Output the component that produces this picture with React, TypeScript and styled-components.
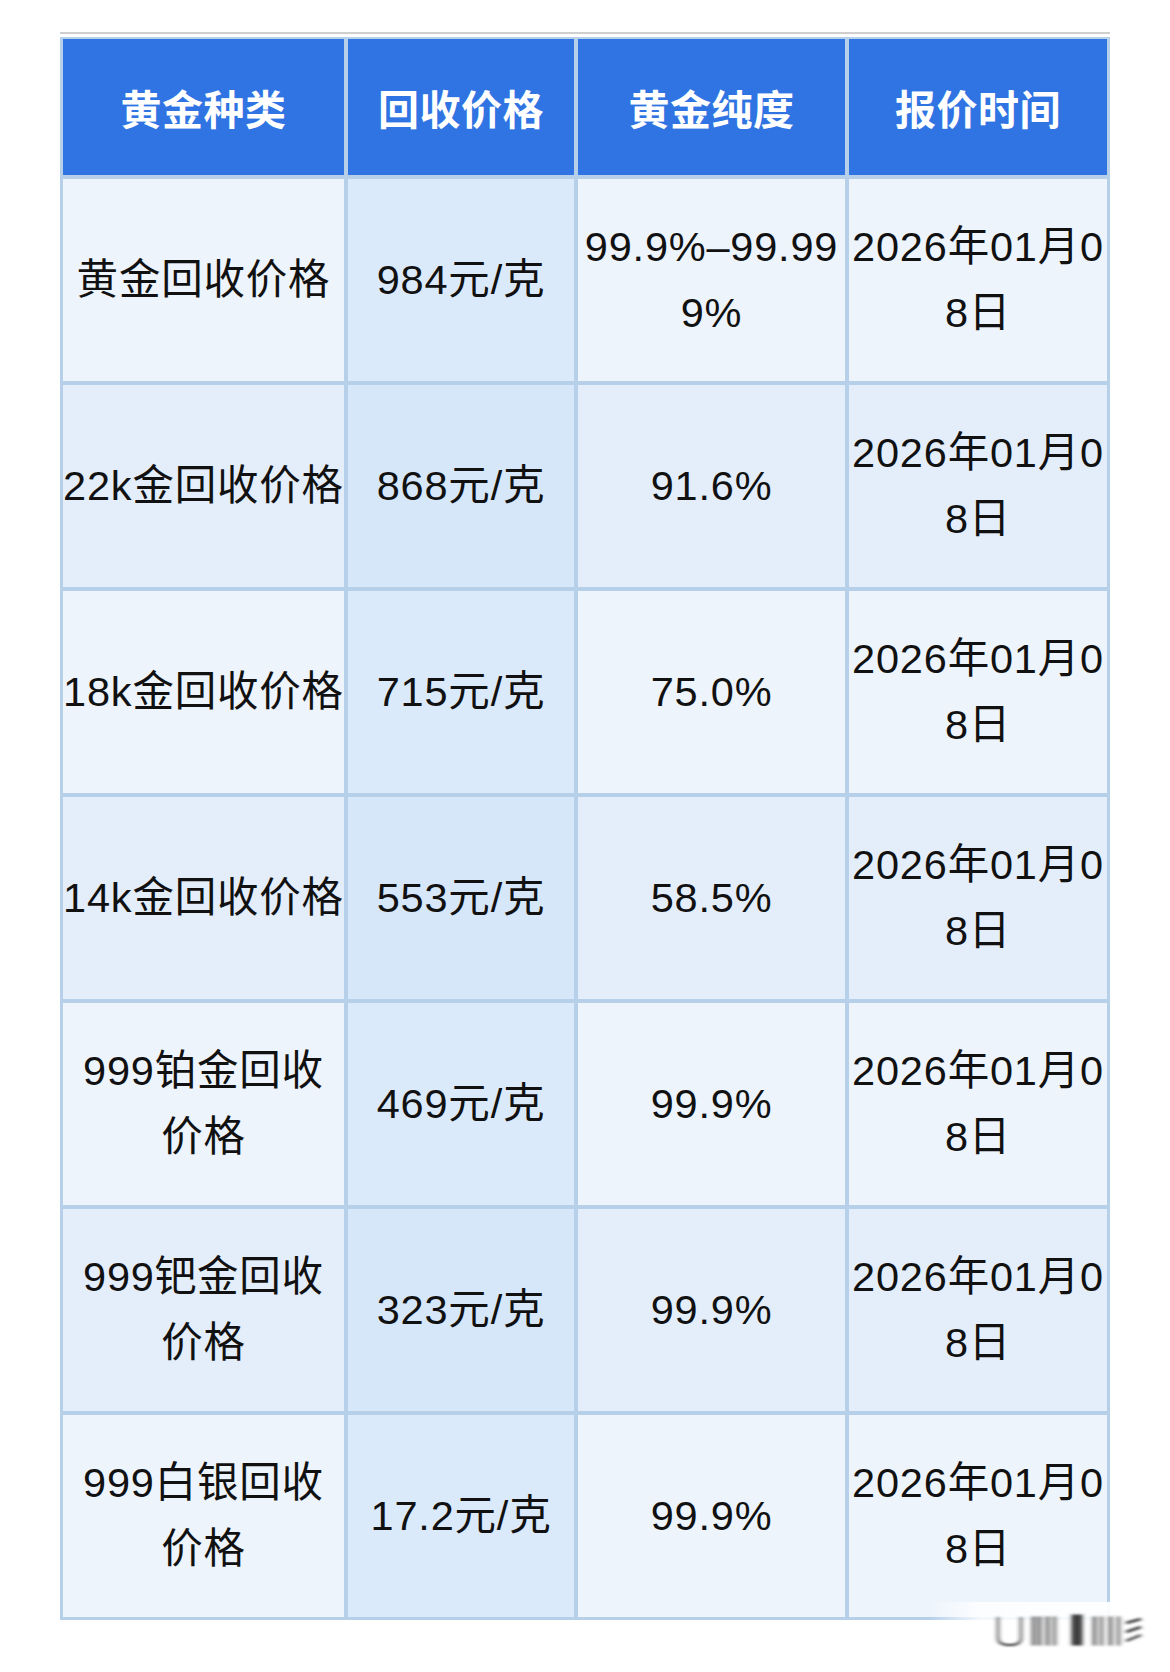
import React from "react";
import styled, { createGlobalStyle } from "styled-components";

const GlobalStyle = createGlobalStyle`
  html, body {
    margin: 0;
    padding: 0;
    background: #ffffff;
  }
  body {
    font-family: "Liberation Sans", "Noto Sans CJK SC", sans-serif;
    color: #111111;
  }
`;

type PriceRow = {
  kind: string[];
  price: string;
  purity: string[];
  date: string[];
};

const columns = ["黄金种类", "回收价格", "黄金纯度", "报价时间"];

const quoteDate = ["2026年01月0", "8日"];

const rows: PriceRow[] = [
  { kind: ["黄金回收价格"], price: "984元/克", purity: ["99.9%–99.99", "9%"], date: quoteDate },
  { kind: ["22k金回收价格"], price: "868元/克", purity: ["91.6%"], date: quoteDate },
  { kind: ["18k金回收价格"], price: "715元/克", purity: ["75.0%"], date: quoteDate },
  { kind: ["14k金回收价格"], price: "553元/克", purity: ["58.5%"], date: quoteDate },
  { kind: ["999铂金回收", "价格"], price: "469元/克", purity: ["99.9%"], date: quoteDate },
  { kind: ["999钯金回收", "价格"], price: "323元/克", purity: ["99.9%"], date: quoteDate },
  { kind: ["999白银回收", "价格"], price: "17.2元/克", purity: ["99.9%"], date: quoteDate },
];

const Page = styled.div`
  position: relative;
  width: 1170px;
  min-height: 1672px;
  padding: 32px 0 0 60px;
  box-sizing: border-box;
`;

const TopRule = styled.div`
  width: 1050px;
  height: 2px;
  background: #cfcfcf;
  margin-bottom: 3px;
`;

const Table = styled.div`
  display: grid;
  grid-template-columns: 281px 226px 267px 258px;
  grid-template-rows: 136px repeat(7, 202px);
  gap: 4px;
  width: 1050px;
  padding: 2px 3px 3px 3px;
  box-sizing: border-box;
  background: #b6d0ea;
`;

const HeadCell = styled.div`
  display: flex;
  align-items: center;
  justify-content: center;
  background: #2f74e2;
  color: #ffffff;
  font-family: "Noto Sans CJK SC", "Liberation Sans", sans-serif;
  font-weight: 700;
  font-size: 41px;
  letter-spacing: 0.5px;
`;

const Cell = styled.div<{ $even: boolean; $accent?: boolean }>`
  display: flex;
  align-items: center;
  justify-content: center;
  text-align: center;
  white-space: nowrap;
  font-size: 41.5px;
  line-height: 66px;
  letter-spacing: 0.8px;
  color: #111111;
  background: ${({ $even, $accent }) =>
    $accent ? ($even ? "#d6e7fa" : "#dbeafb") : $even ? "#e4eefb" : "#edf4fc"};
`;

const Watermark = styled.div`
  position: absolute;
  left: 930px;
  top: 1602px;
  width: 230px;
  height: 54px;
  background: linear-gradient(
    90deg,
    rgba(255, 255, 255, 0) 0%,
    rgba(255, 255, 255, 0.85) 22%,
    rgba(255, 255, 255, 0.95) 100%
  );
`;

const Lines: React.FC<{ lines: string[] }> = ({ lines }) => (
  <span>
    {lines.map((line, i) => (
      <React.Fragment key={i}>
        {i > 0 && <br />}
        {line}
      </React.Fragment>
    ))}
  </span>
);

const WatermarkMark: React.FC = () => (
  <svg width="230" height="54" viewBox="0 0 230 54">
    <defs>
      <filter id="wm-blur" x="-20%" y="-50%" width="140%" height="200%">
        <feGaussianBlur stdDeviation="2.2 1" />
      </filter>
    </defs>
    <g filter="url(#wm-blur)" fill="#333333" stroke="#333333">
      <path d="M68 15 V36 Q68 43 80 43 Q91 43 91 36 V15" fill="none" strokeWidth="2" />
      <rect x="102" y="15" width="3" height="28" opacity="0.7" />
      <rect x="108" y="15" width="3" height="28" opacity="0.7" />
      <rect x="116" y="15" width="3" height="28" opacity="0.7" />
      <rect x="123" y="15" width="3" height="28" opacity="0.6" />
      <rect x="142" y="13" width="10" height="30" opacity="0.95" />
      <rect x="163" y="15" width="3" height="28" opacity="0.7" />
      <rect x="170" y="15" width="3" height="28" opacity="0.6" />
      <rect x="179" y="15" width="3" height="28" opacity="0.7" />
      <rect x="187" y="15" width="3" height="28" opacity="0.6" />
      <path d="M196 21 L211 17 M196 30 L211 25 M196 39 L211 33" strokeWidth="2.4" fill="none" />
    </g>
  </svg>
);

export default function App() {
  return (
    <>
      <GlobalStyle />
      <Page>
        <TopRule />
        <Table>
          {columns.map((title) => (
            <HeadCell key={title}>{title}</HeadCell>
          ))}
          {rows.map((row, i) => {
            const even = i % 2 === 1;
            return (
              <React.Fragment key={row.kind.join("")}>
                <Cell $even={even}>
                  <Lines lines={row.kind} />
                </Cell>
                <Cell $even={even} $accent>
                  {row.price}
                </Cell>
                <Cell $even={even}>
                  <Lines lines={row.purity} />
                </Cell>
                <Cell $even={even}>
                  <Lines lines={row.date} />
                </Cell>
              </React.Fragment>
            );
          })}
        </Table>
        <Watermark>
          <WatermarkMark />
        </Watermark>
      </Page>
    </>
  );
}
